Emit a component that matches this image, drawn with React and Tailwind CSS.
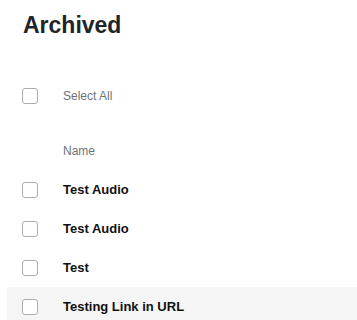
import React from 'react'

const items = [
  { id: 1, name: 'Test Audio' },
  { id: 2, name: 'Test Audio' },
  { id: 3, name: 'Test' },
  { id: 4, name: 'Testing Link in URL', hover: true },
]

const Box = () => (
  <span className="block w-4 h-4 rounded-[3px] border border-[#a9adb3] bg-white shrink-0" />
)

const App = () => {
  return (
    <div
      className="h-[320px] bg-white overflow-hidden"
      style={{ fontFamily: '"Liberation Sans", Arial, sans-serif' }}
    >
      {/* page title */}
      <h1 className="pl-[23px] pt-[11px] text-[23px] leading-[28px] font-bold text-[#212529]">
        Archived
      </h1>

      {/* select all */}
      <div className="mt-[49px] pl-[22px] flex items-center h-4">
        <Box />
        <span className="ml-[25px] text-[12px] text-[#6c737a]">Select All</span>
      </div>

      {/* list */}
      <div className="mt-[27px] ml-[7px]">
        <div className="h-[39px] flex items-center pl-[56px] text-[12px] text-[#6c737a]">
          Name
        </div>
        {items.map((item) => (
          <div
            key={item.id}
            className={`h-[39px] flex items-center pl-[15px] ${item.hover ? 'bg-[#f5f5f5]' : ''}`}
          >
            <Box />
            <span className="ml-[25px] text-[13px] font-bold text-[#111]">{item.name}</span>
          </div>
        ))}
      </div>
    </div>
  )
}

export default App
